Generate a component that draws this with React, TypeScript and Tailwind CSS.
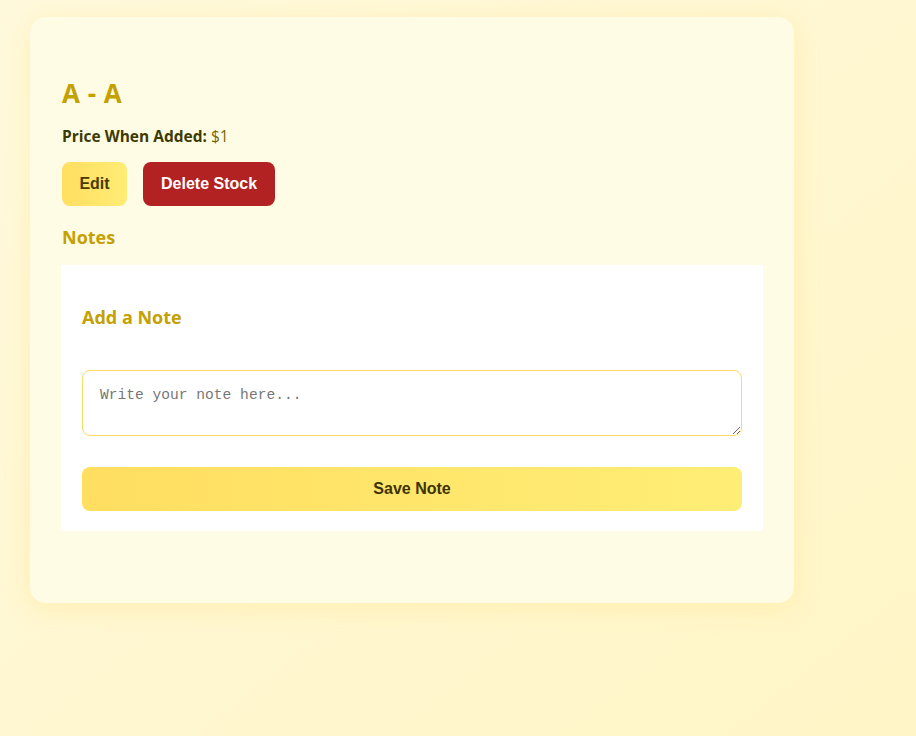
export default function App() {
  return (
    <div className="min-h-screen w-full bg-gradient-to-br from-[#fff9dc] to-[#fff5c6] pt-[17px] pl-[30px]">
      <div className="w-[764px] h-[586px] rounded-2xl bg-[#fffce6] shadow-[0_4px_24px_rgba(255,221,87,0.25)] px-8 pt-[58px] font-['Open_Sans','Noto_Sans',sans-serif]">
        <h2 className="text-[26px] leading-8 font-bold tracking-[0.5px] text-[#c4a000] translate-y-[2px]">A - A</h2>
        <p className="mt-[17px] text-[15.5px] leading-6 text-[#3d3a00]">
          <span className="font-bold">Price When Added:</span>{" "}
          <span className="text-[#7a6400]">$1</span>
        </p>
        <div className="mt-[14px] flex gap-4 font-['Liberation_Sans',Arial,sans-serif]">
          <button className="h-11 w-[65px] rounded-lg bg-gradient-to-r from-[#ffdf60] to-[#ffec75] text-[16px] font-bold text-[#4a3a00]">
            Edit
          </button>
          <button className="h-11 px-[18px] rounded-lg bg-[#b22222] text-[16px] font-bold text-white">
            Delete Stock
          </button>
        </div>
        <h3 className="mt-[17px] text-[18px] leading-7 font-bold text-[#c4a000]">Notes</h3>
        <div className="mt-[14px] -ml-px w-[702px] bg-white px-[21px] pt-[38px] pb-5">
          <h4 className="text-[18px] leading-7 font-bold text-[#c4a000]">Add a Note</h4>
          <textarea
            placeholder="Write your note here..."
            className="mt-[39px] block w-[660px] h-[66px] rounded-lg border border-[#ffd966] px-[17px] py-[14px] font-['Liberation_Mono',monospace] text-[14.6px] leading-5 text-[#333] placeholder:text-[#777] outline-none"
          />
          <button className="mt-[31px] w-[660px] h-11 rounded-lg bg-gradient-to-r from-[#ffde60] to-[#ffee76] font-['Liberation_Sans',Arial,sans-serif] text-[16px] font-bold text-[#3d3300]">
            Save Note
          </button>
        </div>
      </div>
    </div>
  );
}
